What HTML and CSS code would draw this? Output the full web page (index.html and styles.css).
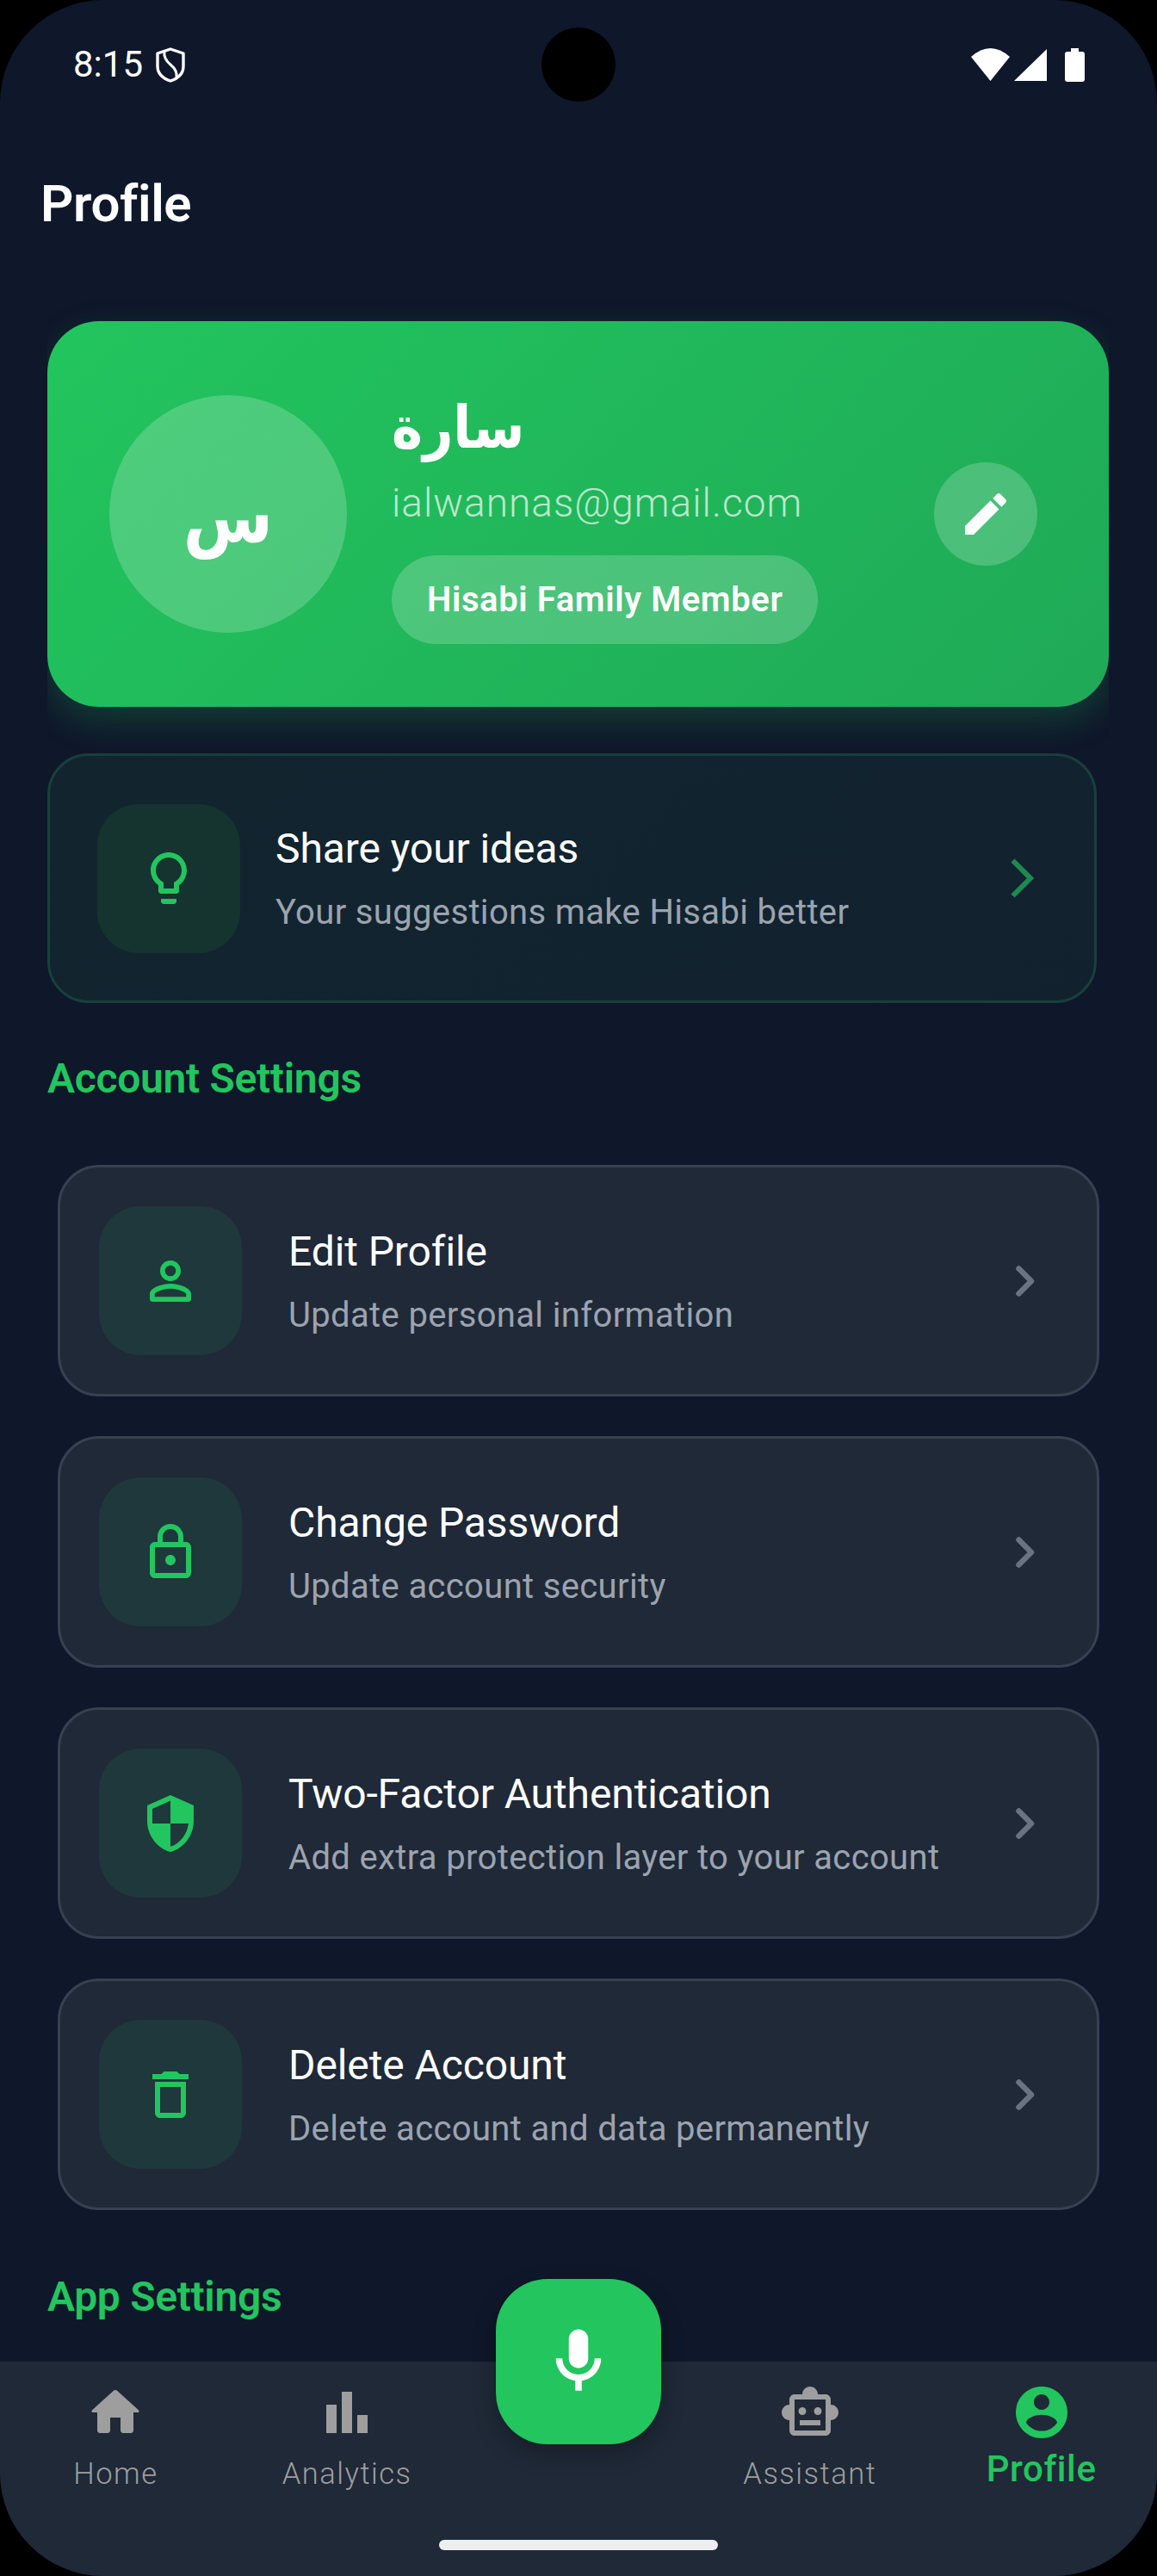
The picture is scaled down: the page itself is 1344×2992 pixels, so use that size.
FILE: index.html
```html
<!DOCTYPE html>
<html lang="en">
<head>
  <meta charset="UTF-8">
  <meta name="viewport" content="width=device-width, initial-scale=1.0">
  <title>Profile</title>
  <link rel="stylesheet" href="styles.css">
</head>
<body>
  <div class="screen">
    <div class="camera-hole"></div>

    <!-- Status bar -->
    <div class="status-bar">
      <div class="status-left">
        <span class="status-time">8:15</span>
        <svg class="status-shield" viewBox="0 0 34 41" fill="none" stroke="#fff" stroke-width="3.4" stroke-linejoin="round">
          <path d="M17 2 32 7v15c0 8-6 14-15 17C8 36 2 30 2 22V7z"/>
          <path d="M10 5c-1 6 1 10 7 15s8 9 7 15" stroke-width="3"/>
        </svg>
      </div>
      <div class="status-right">
        <svg width="46" height="38" viewBox="0 0 46 38" fill="#fff"><path d="M0 10Q22.5-10 45 10L22.5 38z"/></svg>
        <svg width="38" height="38" viewBox="0 0 38 38" fill="#fff"><path d="M38 1V38H0z"/></svg>
        <svg class="status-battery" width="23" height="39" viewBox="0 0 23 39" fill="#fff"><path d="M7 0h9v4h4a3 3 0 0 1 3 3v29a3 3 0 0 1-3 3H3a3 3 0 0 1-3-3V7a3 3 0 0 1 3-3h4z"/></svg>
      </div>
    </div>

    <div class="content">
      <h1 class="page-title">Profile</h1>

      <!-- Green profile card -->
      <div class="hero-clip">
        <div class="hero">
          <div class="avatar">س</div>
          <div class="hero-info">
            <div class="hero-name">سارة</div>
            <div class="hero-email">ialwannas@gmail.com</div>
            <div class="hero-badge">Hisabi Family Member</div>
          </div>
          <div class="edit-btn">
            <svg width="64" height="64" viewBox="0 0 24 24" fill="#fff"><path d="M3 17.25V21h3.75L17.81 9.94l-3.75-3.75L3 17.25zM20.71 7.04c.39-.39.39-1.02 0-1.41l-2.34-2.34c-.39-.39-1.02-.39-1.41 0l-1.83 1.83 3.75 3.75 1.83-1.83z"/></svg>
          </div>
        </div>
      </div>

      <div class="row row-idea">
        <div class="row-icon">
          <svg width="72" height="72" viewBox="0 0 24 24"><path d="M9 21c0 .55.45 1 1 1h4c.55 0 1-.45 1-1v-1H9v1zm3-19C8.14 2 5 5.14 5 9c0 2.38 1.19 4.47 3 5.74V17c0 .55.45 1 1 1h6c.55 0 1-.45 1-1v-2.26c1.81-1.27 3-3.36 3-5.74 0-3.86-3.14-7-7-7zm2.85 11.1l-.85.6V16h-4v-2.3l-.85-.6C7.8 12.16 7 10.63 7 9c0-2.76 2.24-5 5-5s5 2.24 5 5c0 1.63-.8 3.16-2.15 4.1z"/></svg>
        </div>
        <div class="row-text">
          <div class="row-title">Share your ideas</div>
          <div class="row-sub">Your suggestions make Hisabi better</div>
        </div>
        <svg class="chevron-idea" width="28" height="46" viewBox="0 0 28 46" fill="none"><path d="M2.5 2.5 23 23 2.5 43.5" stroke-width="6"/></svg>
      </div>

      <h2 class="section-title section-account">Account Settings</h2>

      <div class="row-list">
        <div class="row">
          <div class="row-icon">
            <svg width="72" height="72" viewBox="0 0 24 24"><path d="M12 5.9a2.1 2.1 0 1 1 0 4.2 2.1 2.1 0 0 1 0-4.2m0 9c2.97 0 6.1 1.46 6.1 2.1v1.1H5.9V17c0-.64 3.13-2.1 6.1-2.1M12 4C9.79 4 8 5.79 8 8s1.79 4 4 4 4-1.79 4-4-1.79-4-4-4zm0 9c-2.67 0-8 1.34-8 4v2c0 .55.45 1 1 1h14c.55 0 1-.45 1-1v-2c0-2.66-5.33-4-8-4z"/></svg>
          </div>
          <div class="row-text">
            <div class="row-title">Edit Profile</div>
            <div class="row-sub">Update personal information</div>
          </div>
          <svg class="chevron" width="22" height="36" viewBox="0 0 22 36" fill="none"><path d="M3.5 3.5 18 18 3.5 32.5" stroke-width="6.5" stroke-linecap="round" stroke-linejoin="round"/></svg>
        </div>

        <div class="row">
          <div class="row-icon">
            <svg width="72" height="72" viewBox="0 0 24 24"><path d="M18 8h-1V6c0-2.76-2.24-5-5-5S7 3.24 7 6v2H6c-1.1 0-2 .9-2 2v10c0 1.1.9 2 2 2h12c1.1 0 2-.9 2-2V10c0-1.1-.9-2-2-2zM9 6c0-1.66 1.34-3 3-3s3 1.34 3 3v2H9V6zm9 14H6V10h12v10zm-6-3c1.1 0 2-.9 2-2s-.9-2-2-2-2 .9-2 2 .9 2 2 2z"/></svg>
          </div>
          <div class="row-text">
            <div class="row-title">Change Password</div>
            <div class="row-sub">Update account security</div>
          </div>
          <svg class="chevron" width="22" height="36" viewBox="0 0 22 36" fill="none"><path d="M3.5 3.5 18 18 3.5 32.5" stroke-width="6.5" stroke-linecap="round" stroke-linejoin="round"/></svg>
        </div>

        <div class="row">
          <div class="row-icon">
            <svg width="72" height="72" viewBox="0 0 24 24"><path d="M12 1L3 5v6c0 5.55 3.84 10.74 9 12 5.16-1.26 9-6.45 9-12V5l-9-4zm0 10.99h7c-.53 4.12-3.28 7.79-7 8.94V12H5V6.3l7-3.11v8.8z"/></svg>
          </div>
          <div class="row-text">
            <div class="row-title">Two-Factor Authentication</div>
            <div class="row-sub">Add extra protection layer to your account</div>
          </div>
          <svg class="chevron" width="22" height="36" viewBox="0 0 22 36" fill="none"><path d="M3.5 3.5 18 18 3.5 32.5" stroke-width="6.5" stroke-linecap="round" stroke-linejoin="round"/></svg>
        </div>

        <div class="row">
          <div class="row-icon">
            <svg width="72" height="72" viewBox="0 0 24 24"><path d="M6 19c0 1.1.9 2 2 2h8c1.1 0 2-.9 2-2V7H6v12zM8 9h8v10H8V9zm7.5-5l-1-1h-5l-1 1H5v2h14V4h-3.5z"/></svg>
          </div>
          <div class="row-text">
            <div class="row-title">Delete Account</div>
            <div class="row-sub">Delete account and data permanently</div>
          </div>
          <svg class="chevron" width="22" height="36" viewBox="0 0 22 36" fill="none"><path d="M3.5 3.5 18 18 3.5 32.5" stroke-width="6.5" stroke-linecap="round" stroke-linejoin="round"/></svg>
        </div>
      </div>

      <h2 class="section-title section-app">App Settings</h2>
    </div>

    <!-- Bottom navigation -->
    <div class="bottom-nav">
      <div class="tab">
        <svg width="72" height="72" viewBox="0 0 24 24"><path d="M10 19v-5h4v5c0 .55.45 1 1 1h3c.55 0 1-.45 1-1v-7h1.7c.46 0 .68-.57.33-.87L12.67 3.6c-.38-.34-.96-.34-1.34 0l-8.36 7.53c-.34.3-.13.87.33.87H5v7c0 .55.45 1 1 1h3c.55 0 1-.45 1-1z"/></svg>
        <span class="tab-label">Home</span>
      </div>
      <div class="tab">
        <svg width="72" height="72" viewBox="0 0 72 72"><path d="M12 27h12v33H12zM30 12h12v48H30zM48 39h12v21H48z"/></svg>
        <span class="tab-label">Analytics</span>
      </div>
      <div class="tab tab-mic">
        <div class="mic-btn">
          <svg width="90" height="90" viewBox="0 0 24 24" fill="#fff"><path d="M12 14c1.66 0 3-1.34 3-3V5c0-1.66-1.34-3-3-3S9 3.34 9 5v6c0 1.66 1.34 3 3 3zM17 11c0 2.76-2.24 5-5 5s-5-2.24-5-5H5c0 3.53 2.61 6.43 6 6.92V21h2v-3.08c3.39-.49 6-3.39 6-6.92h-2z"/></svg>
        </div>
      </div>
      <div class="tab">
        <svg width="72" height="72" viewBox="0 0 24 24"><path d="M20 9V7c0-1.1-.9-2-2-2h-3c0-1.66-1.34-3-3-3S9 3.34 9 5H6c-1.1 0-2 .9-2 2v2c-1.66 0-3 1.34-3 3s1.34 3 3 3v4c0 1.1.9 2 2 2h12c1.1 0 2-.9 2-2v-4c1.66 0 3-1.34 3-3s-1.34-3-3-3zm-2 10H6V7h12v12zm-9-6c-.83 0-1.5-.67-1.5-1.5S8.17 10 9 10s1.5.67 1.5 1.5S9.83 13 9 13zm7.5-1.5c0 .83-.67 1.5-1.5 1.5s-1.5-.67-1.5-1.5.67-1.5 1.5-1.5 1.5.67 1.5 1.5zM8 15h8v2H8v-2z"/></svg>
        <span class="tab-label">Assistant</span>
      </div>
      <div class="tab tab-active">
        <svg width="72" height="72" viewBox="0 0 24 24"><path d="M12 2C6.48 2 2 6.48 2 12s4.48 10 10 10 10-4.48 10-10S17.52 2 12 2zm0 3c1.66 0 3 1.34 3 3s-1.34 3-3 3-3-1.34-3-3 1.34-3 3-3zm0 14.2c-2.5 0-4.71-1.28-6-3.22.03-1.99 4-3.08 6-3.08 1.99 0 5.97 1.09 6 3.08-1.29 1.94-3.5 3.22-6 3.22z"/></svg>
        <span class="tab-label">Profile</span>
      </div>
      <div class="home-indicator"></div>
    </div>
  </div>
</body>
</html>
```

FILE: styles.css
```css
body {
  margin: 0;
  background: #000;
  font-family: Roboto, "DejaVu Sans", sans-serif;
  color: #fff;
}

.screen {
  position: relative;
  display: flex;
  flex-direction: column;
  width: 1344px;
  height: 2992px;
  overflow: hidden;
  border-radius: 120px;
  background: #0f172a;
}

.camera-hole {
  position: absolute;
  top: 32px;
  left: 629px;
  width: 86px;
  height: 86px;
  border-radius: 50%;
  background: #000;
}

/* Status bar */
.status-bar {
  display: flex;
  justify-content: space-between;
  align-items: center;
  flex: none;
  height: 150px;
  padding: 0 84px 0 85px;
}

.status-left,
.status-right {
  display: flex;
  align-items: center;
}

.status-left {
  gap: 15px;
}

.status-right {
  gap: 4px;
}

.status-time {
  font-size: 42px;
  line-height: 50px;
}

.status-shield {
  width: 34px;
  height: 41px;
}

.status-battery {
  margin-left: 17px;
}

/* Main column */
.content {
  flex: 1;
  min-height: 0;
  overflow: hidden;
}

.page-title {
  margin: 47px 0 0 47px;
  font-size: 60px;
  line-height: 80px;
  font-weight: 600;
  letter-spacing: -0.4px;
}

/* Green card; its glow stops at the card's sides */
.hero-clip {
  margin: 96px 56px 0 55px;
  clip-path: inset(-30px 0 -60px 0);
}

.hero {
  display: flex;
  align-items: center;
  height: 448px;
  padding: 0 83px 0 72px;
  box-sizing: border-box;
  border-radius: 60px;
  background: linear-gradient(135deg, #22c55e, #1fa957);
  box-shadow: 0 16px 40px rgba(34, 197, 94, 0.22);
}

.avatar {
  display: flex;
  justify-content: center;
  align-items: center;
  flex: none;
  width: 276px;
  height: 276px;
  box-sizing: border-box;
  padding-top: 8px;
  border-radius: 50%;
  background: rgba(255, 255, 255, 0.2);
  font-family: "DejaVu Sans Condensed", "DejaVu Sans", sans-serif;
  font-size: 84px;
  font-weight: 700;
}

.hero-info {
  flex: 1;
  margin-left: 52px;
}

.hero-name {
  font-family: "DejaVu Sans Condensed", "DejaVu Sans", sans-serif;
  font-size: 68px;
  line-height: 100px;
  font-weight: 700;
  text-align: left;
}

.hero-email {
  font-size: 46px;
  line-height: 74px;
  font-weight: 300;
  letter-spacing: 1px;
  color: rgba(255, 255, 255, 0.7);
}

.hero-badge {
  display: inline-block;
  margin-top: 24px;
  padding: 0 41px;
  font-size: 40px;
  line-height: 103px;
  font-weight: 600;
  letter-spacing: 0.6px;
  border-radius: 52px;
  background: rgba(255, 255, 255, 0.2);
}

.edit-btn {
  display: flex;
  justify-content: center;
  align-items: center;
  flex: none;
  width: 120px;
  height: 120px;
  border-radius: 50%;
  background: rgba(255, 255, 255, 0.2);
}

/* Rows */
.row {
  display: flex;
  align-items: center;
  width: 1210px;
  height: 269px;
  box-sizing: border-box;
  padding: 0 72px 0 45px;
  border: 3px solid #374151;
  border-radius: 48px;
  background: #1f2937;
}

.row-icon {
  display: flex;
  justify-content: center;
  align-items: center;
  flex: none;
  width: 166px;
  height: 173px;
  border-radius: 48px;
  background: rgba(34, 197, 94, 0.1);
}

.row-icon svg {
  fill: #22c55e;
}

.row-text {
  flex: 1;
  margin-left: 54px;
}

.row-title {
  font-size: 48px;
  line-height: 80px;
  letter-spacing: -0.1px;
}

.row-sub {
  font-size: 40px;
  line-height: 68px;
  letter-spacing: 0.35px;
  color: #9ca3af;
}

.chevron path {
  stroke: #6b7280;
}

.row-idea {
  width: 1219px;
  height: 290px;
  margin: 0 0 0 55px;
  padding: 0 69px 0 55px;
  border-color: #17403c;
  background: linear-gradient(135deg, #12252f, #11222e);
}

.row-idea .row-icon {
  background: #15332f;
}

.row-idea .row-text {
  margin-left: 41px;
}

.chevron-idea path {
  stroke: #1d8a50;
}

.hero-clip + .row-idea {
  margin-top: 54px;
}

.section-title {
  margin: 0 0 0 55px;
  font-size: 48px;
  line-height: 70px;
  font-weight: 600;
  letter-spacing: -0.3px;
  color: #22c55e;
}

.section-account {
  margin-top: 53px;
}

.row-list {
  display: flex;
  flex-direction: column;
  gap: 46px;
  margin: 65px 0 0 67px;
}

.section-app {
  margin-top: 66px;
}

/* Bottom navigation */
.bottom-nav {
  position: relative;
  display: grid;
  grid-template-columns: repeat(5, 1fr);
  flex: none;
  height: 249px;
  background: #1f2937;
}

.tab {
  display: flex;
  flex-direction: column;
  align-items: center;
  padding-top: 23px;
}

.tab svg {
  fill: #9e9e9e;
}

.tab-label {
  margin-top: 10px;
  font-size: 34.5px;
  line-height: 50px;
  font-weight: 300;
  letter-spacing: 1.5px;
  color: #9e9e9e;
}

.tab-active svg {
  fill: #22c55e;
}

.tab-active .tab-label {
  margin-top: 5px;
  font-size: 42px;
  font-weight: 500;
  letter-spacing: 0.6px;
  color: #22c55e;
}

.tab-mic {
  position: relative;
}

.mic-btn {
  position: absolute;
  top: -96px;
  left: calc(50% - 96px);
  display: flex;
  justify-content: center;
  align-items: center;
  width: 192px;
  height: 192px;
  border-radius: 60px;
  background: #22c55e;
  box-shadow: 0 10px 26px rgba(0, 0, 0, 0.28);
}

.mic-btn svg {
  fill: #fff;
}

.home-indicator {
  position: absolute;
  left: 510px;
  bottom: 30px;
  width: 324px;
  height: 12px;
  border-radius: 6px;
  background: #eceef0;
}
```
